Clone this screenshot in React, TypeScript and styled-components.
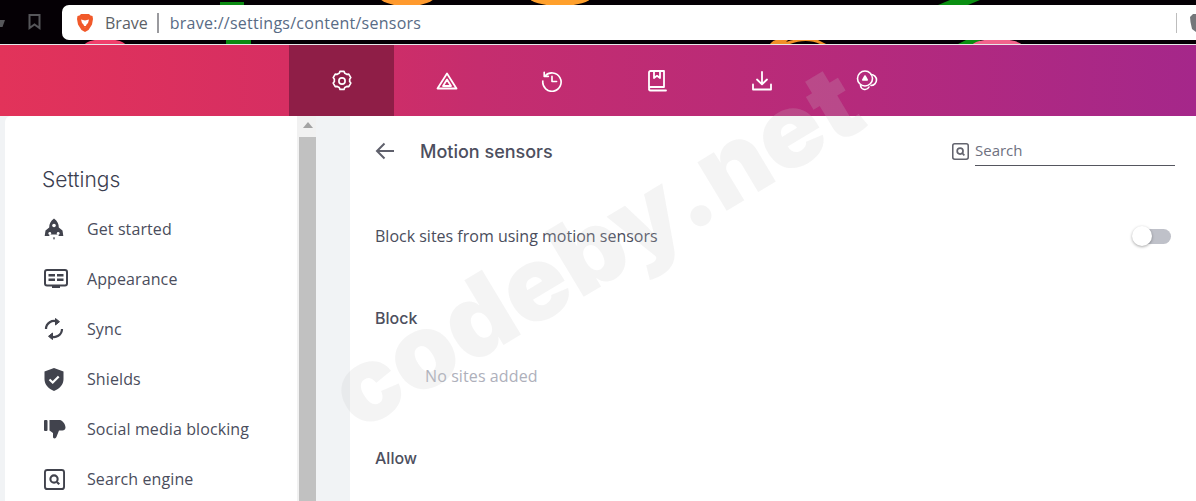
import * as React from "react";
import styled, { createGlobalStyle } from "styled-components";

const GlobalStyle = createGlobalStyle`
  html, body { margin: 0; padding: 0; height: 100%; background: #f1f3f5; }
  #root { height: 100%; }
`;

const Page = styled.div`
  position: relative;
  width: 1196px;
  height: 501px;
  overflow: hidden;
  display: flex;
  flex-direction: column;
  font-family: "Open Sans", "Lato", sans-serif;
`;

const BrowserBar = styled.div`
  position: relative;
  flex: none;
  background: #050005;
  border-bottom: 1px solid #e8e8ea;
  display: flex;
  align-items: flex-start;
  padding-top: 5px;
  height: 39px;
`;

const Wallpaper = styled.svg`
  position: absolute;
  left: 0;
  top: 0;
`;

const BarButton = styled.div`
  position: relative;
  width: 62px;
  height: 35px;
  flex: none;
`;

const BookmarkGlyph = styled.svg`
  position: absolute;
  left: 28px;
  top: 9px;
`;

const BackGlyph = styled.svg`
  position: absolute;
  left: 0;
  top: 15px;
`;

const AddressBox = styled.div`
  position: relative;
  flex: 1;
  height: 35px;
  background: #fff;
  border-radius: 7px 0 0 7px;
  display: flex;
  align-items: center;
  padding-left: 15px;
  font-family: "Open Sans", sans-serif;
  font-size: 16px;
  color: #5f6368;
`;

const SiteName = styled.span`
  margin-left: 12px;
  color: #5c5f66;
`;

const AddressDivider = styled.span`
  width: 2px;
  height: 20px;
  background: #9a9a9e;
  margin: 0 11px 0 9px;
`;

const Url = styled.span`
  color: #586b85;
  letter-spacing: 0.26px;
`;

const BarEnd = styled.div`
  margin-left: auto;
  display: flex;
  align-items: center;
`;

const EndDivider = styled.span`
  width: 1px;
  height: 20px;
  background: #bdbdbd;
  margin-right: 13px;
`;

const NavBar = styled.nav`
  height: 71px;
  flex: none;
  display: flex;
  padding-left: 289px;
  background: linear-gradient(90deg, #e2335a 0%, #d62e62 24%, #c52d6e 40%, #b52a7c 72%, #a5278a 100%);
`;

const NavItem = styled.div<{ $active?: boolean }>`
  width: 105px;
  display: flex;
  align-items: center;
  justify-content: center;
  background: ${(p) => (p.$active ? "#8f1e47" : "transparent")};
`;

const Main = styled.div`
  flex: 1;
  min-height: 0;
  display: flex;
`;

const Sidebar = styled.aside`
  width: 292px;
  margin-left: 5px;
  flex: none;
  background: #fff;
  border-radius: 6px 0 0 0;
  padding: 49px 0 0 37px;
  box-sizing: border-box;
`;

const SidebarTitle = styled.h2`
  margin: 0 0 9px;
  font-family: "Inter", sans-serif;
  font-weight: 300;
  font-size: 21px;
  line-height: 30px;
  color: #3b3e4f;
`;

const SideRow = styled.div`
  height: 50px;
  display: flex;
  align-items: center;
  font-size: 16px;
  letter-spacing: 0.1px;
  color: #4a4d5c;
`;

const SideIcon = styled.span`
  width: 45px;
  flex: none;
  display: flex;
  padding-left: 2px;
  box-sizing: border-box;
`;

const ScrollTrack = styled.div`
  width: 19px;
  margin-right: 34px;
  flex: none;
  background: #f1f1f1;
  padding-left: 2px;
  box-sizing: border-box;
  display: flex;
  flex-direction: column;
`;

const ScrollArrow = styled.div`
  height: 21px;
  flex: none;
  display: flex;
  align-items: center;
  justify-content: center;
  padding-bottom: 3px;
  box-sizing: border-box;
`;

const ScrollThumb = styled.div`
  flex: 1;
  background: #c1c1c1;
`;

const Content = styled.section`
  flex: 1;
  background: #fff;
  padding: 0 21px 0 25px;
`;

const HeaderRow = styled.div`
  height: 70px;
  display: flex;
  align-items: center;
`;

const BackButton = styled.span`
  width: 45px;
  display: flex;
`;

const PageTitle = styled.h1`
  margin: 0;
  font-family: "Inter", sans-serif;
  font-weight: 500;
  font-size: 18px;
  color: #4d4f5e;
`;

const SearchBox = styled.div`
  margin-left: auto;
  display: flex;
  align-items: center;
`;

const SearchField = styled.div`
  width: 200px;
  height: 31px;
  margin: 0 0 1px 6px;
  box-sizing: border-box;
  border-bottom: 1px solid #55565f;
  font-size: 15px;
  line-height: 30px;
  color: #6e7180;
`;

const SettingRow = styled.div`
  height: 100px;
  margin-bottom: 17px;
  display: flex;
  align-items: center;
  justify-content: space-between;
  font-size: 16px;
  color: #4a4d5c;
`;

const Toggle = styled.div`
  position: relative;
  width: 34px;
  height: 15px;
  margin-right: 4px;
  border-radius: 8px;
  background: #bfc1c9;
`;

const ToggleKnob = styled.span`
  position: absolute;
  left: -5px;
  top: -3px;
  width: 20px;
  height: 20px;
  border-radius: 50%;
  background: #fff;
  box-shadow: 0 1px 3px rgba(0, 0, 0, 0.35);
`;

const SectionTitle = styled.h3`
  margin: 0;
  height: 30px;
  line-height: 30px;
  font-family: "Inter", sans-serif;
  font-weight: 500;
  font-size: 16px;
  color: #4d4f5e;
`;

const EmptyNote = styled.div`
  height: 110px;
  padding: 28px 0 0 50px;
  box-sizing: border-box;
  font-size: 16px;
  letter-spacing: 0.1px;
  line-height: 30px;
  color: #aeb0bb;
`;

const Watermark = styled.div`
  position: absolute;
  left: 296px;
  top: 186px;
  font-family: "Inter", sans-serif;
  font-weight: 900;
  font-size: 104px;
  line-height: 120px;
  white-space: nowrap;
  color: rgba(200, 200, 200, 0.2);
  transform: rotate(-31deg);
  pointer-events: none;
`;

const stroke = { fill: "none", stroke: "#fff", strokeWidth: 1.8, strokeLinecap: "round" as const, strokeLinejoin: "round" as const };
const dark = "#41434d";

const GearIcon = () => (
  <svg width="22" height="22" viewBox="0 0 24 24" {...stroke}>
    <circle cx="12" cy="12" r="3.400" />
    <path d="M9 3.500 9.800 1.500h4.400l.8 2a9 9 0 0 1 2.300 1.300l2.100-.3 2.200 3.800-1.300 1.700a9 9 0 0 1 0 2.600l1.300 1.700-2.200 3.800-2.100-.3a9 9 0 0 1-2.300 1.300l-.8 2H9.800l-.8-2a9 9 0 0 1-2.300-1.300l-2.100.3-2.200-3.800 1.300-1.700a9 9 0 0 1 0-2.600L2.400 8.300l2.200-3.800 2.100.3A9 9 0 0 1 9 3.500Z" />
  </svg>
);

const RewardsIcon = () => (
  <svg width="22" height="18" viewBox="0 0 22 18" {...stroke}>
    <path d="M11 1.500 1.500 16.500h19L11 1.500Z" />
    <path d="M11 7.500 7 14h8l-4-6.500Z" />
  </svg>
);

const HistoryIcon = () => (
  <svg width="22" height="22" viewBox="0 0 24 24" {...stroke}>
    <path d="M4.500 6.500A10 10 0 1 1 2 12" />
    <path d="M3.500 2.500v4.500H8" />
    <path d="M12 7v5.500h5" />
  </svg>
);

const BookmarksIcon = () => (
  <svg width="20" height="22" viewBox="0 0 20 22" {...stroke}>
    <path d="M2 18V2.500A1.500 1.500 0 0 1 3.500 1H17v16H3.500A1.700 1.700 0 0 0 2 18.500 1.800 1.800 0 0 0 3.500 20.500H19" />
    <path d="M7 1v7l3-2.200L13 8V1" />
  </svg>
);

const DownloadIcon = () => (
  <svg width="20" height="20" viewBox="0 0 20 20" {...stroke}>
    <path d="M10 1v12M5 8.500l5 4.800 5-4.800" />
    <path d="M1 13.500v5h18v-5" />
  </svg>
);

const WalletIcon = () => (
  <svg width="22" height="22" viewBox="0 0 22 22" {...stroke} strokeWidth={1.6}>
    <circle cx="9" cy="8.500" r="7.500" />
    <path d="M15 4.500a5.500 5.500 0 1 1 0 11" />
    <path d="M4.500 15.500a4.500 4.500 0 0 0 8.500 1.500" />
    <path d="M9 6 6.800 10h4.400L9 6Z" fill="#fff" />
  </svg>
);

const RocketIcon = () => (
  <svg width="20" height="23" viewBox="0 0 20 22" fill={dark}>
    <path d="M10 0c3.500 2.500 4.800 5.500 4.800 9l3.700 3 .8 5.500H15l-1.200-1.500H6.200L5 17.500H.7L1.500 12l3.700-3C5.200 5.500 6.500 2.500 10 0Z" />
    <circle cx="10" cy="7" r="1.800" fill="#fff" />
    <circle cx="5.800" cy="15" r="1.400" fill="#fff" />
    <circle cx="14.200" cy="15" r="1.400" fill="#fff" />
    <path d="M8.900 19h2.200L10 21.500 8.900 19Z" />
  </svg>
);

const AppearanceIcon = () => (
  <svg width="24" height="20" viewBox="0 0 24 20">
    <rect x="1" y="1" width="22" height="15.500" rx="2" fill="none" stroke={dark} strokeWidth="2" />
    <path d="M4.500 5h6.500v2.500H4.500zM13 5h6.500v2.500H13zM4.500 9.500h6.500V12H4.500zM13 9.500h6.500V12H13zM8 17h8v2H8z" fill={dark} />
  </svg>
);

const SyncIcon = () => (
  <svg width="20" height="22" viewBox="0 0 20 22" fill="none" stroke={dark} strokeWidth="2.200">
    <path d="M2 11a8 8 0 0 1 11.500-7.200" />
    <path d="M18 11a8 8 0 0 1-11.500 7.200" />
    <path d="M11.500 .5l4 3.200-4 3.300z" fill={dark} strokeWidth="1" />
    <path d="M8.500 15l-4 3.300 4 3.200z" fill={dark} strokeWidth="1" />
  </svg>
);

const ShieldIcon = () => (
  <svg width="20" height="23" viewBox="0 0 20 23">
    <path d="M10 0 19.500 3.500V11c0 5.500-4 9.800-9.500 12C4.500 20.800.5 16.500.5 11V3.500L10 0Z" fill={dark} />
    <path d="m5.500 11.500 3.200 3 6-6" fill="none" stroke="#fff" strokeWidth="2.200" />
  </svg>
);

const ThumbDownIcon = () => (
  <svg width="22" height="20" viewBox="0 0 22 20" fill={dark}>
    <rect x="0" y="1" width="3.500" height="11" rx="1" />
    <path d="M5.500 1H16c2 0 5.500 4 5.500 7.500 0 2-1.500 3-3 3h-3.500L13 16.500c-.5 2-1.500 3-2.500 3-.8 0-1.500-.800-1.500-1.500V14L5.500 11.500V1Z" />
  </svg>
);

const SearchEngineIcon = ({ color, size }: { color: string; size: number }) => (
  <svg width={size} height={size} viewBox="0 0 22 22" fill="none" stroke={color} strokeWidth="2">
    <rect x="1" y="1" width="20" height="20" rx="2.500" />
    <circle cx="10.500" cy="10.500" r="3.800" strokeWidth="2.200" />
    <path d="m13.500 13.500 2.500 2.500" strokeWidth="2.200" />
  </svg>
);

const BackArrow = () => (
  <svg width="20" height="18" viewBox="0 0 20 18" fill="none" stroke="#5f606c" strokeWidth="2">
    <path d="M19 9H2M9.500 1.500 2 9l7.500 7.500" />
  </svg>
);

const BraveLogo = () => (
  <svg width="16" height="18" viewBox="0 0 16 18">
    <path d="M4 0h8l1.500 1.500L15.500 2l.5 3-1 5.500-3.500 5.500L8 18l-3.500-2L1 10.500 0 5l.5-3 2-.5L4 0Z" fill="#f1592a" />
    <path d="M4 5.500 8 6.500 12 5.500 11 9l-1.500 1.500L8 14l-1.500-3.500L5 9 4 5.500Z" fill="#fff" />
    <path d="M6.500 12h3L8 14.500 6.500 12Z" fill="#f1592a" />
  </svg>
);

const SIDE_ITEMS: [string, React.ReactNode][] = [
  ["Get started", <RocketIcon />],
  ["Appearance", <AppearanceIcon />],
  ["Sync", <SyncIcon />],
  ["Shields", <ShieldIcon />],
  ["Social media blocking", <ThumbDownIcon />],
  ["Search engine", <SearchEngineIcon color={dark} size={21} />],
];

const NAV_ICONS = [
  <GearIcon />,
  <RewardsIcon />,
  <HistoryIcon />,
  <BookmarksIcon />,
  <DownloadIcon />,
  <WalletIcon />,
];

export default function App() {
  return (
    <Page>
      <GlobalStyle />
      <BrowserBar>
        <Wallpaper width="1196" height="44" viewBox="0 0 1196 44">
          <ellipse cx="407" cy="-4" rx="28" ry="10" fill="#ff9a2e" />
          <ellipse cx="560" cy="-3" rx="31" ry="9" fill="#ffa02c" />
          <path d="M220 2h24v4h-24zM226 40h25v4h-25z" fill="#0a8a12" />
          <path d="M938 5l12-5h30l-12 5zM958 44l10-5h14l-6 5z" fill="#0a8f12" />
          <ellipse cx="105" cy="46" rx="21" ry="7" fill="#f0406c" />
          <path d="M770 44c3-4 6-5 12-4h6l-2 2c10-4 26-4 32-2l8 4h-6c-8-4-20-4-30 0Z" fill="#f09028" />
          <ellipse cx="997" cy="46" rx="25" ry="7" fill="#f2648c" />
        </Wallpaper>
        <BarButton>
          <BookmarkGlyph width="13" height="16" viewBox="0 0 13 16" fill="none" stroke="#56565a" strokeWidth="2">
            <path d="M1.500 1h10v13l-5-3.500-5 3.500z" />
          </BookmarkGlyph>
          <BackGlyph width="5" height="7" viewBox="0 0 5 7" fill="#56565a">
            <path d="M0 0h5L2.500 7H0z" />
          </BackGlyph>
        </BarButton>
        <AddressBox>
          <BraveLogo />
          <SiteName>Brave</SiteName>
          <AddressDivider />
          <Url>brave://settings/content/sensors</Url>
          <BarEnd>
            <EndDivider />
            <svg width="6" height="18" viewBox="0 0 6 18" fill="#75767a">
              <path d="M3 0h3v18L2 15 .5 8 0 3z" />
            </svg>
          </BarEnd>
        </AddressBox>
      </BrowserBar>
      <NavBar>
        {NAV_ICONS.map((icon, i) => (
          <NavItem key={i} $active={i === 0}>
            {icon}
          </NavItem>
        ))}
      </NavBar>
      <Main>
        <Sidebar>
          <SidebarTitle>Settings</SidebarTitle>
          {SIDE_ITEMS.map(([label, icon]) => (
            <SideRow key={label}>
              <SideIcon>{icon}</SideIcon>
              {label}
            </SideRow>
          ))}
        </Sidebar>
        <ScrollTrack>
          <ScrollArrow>
            <svg width="10" height="6" viewBox="0 0 10 6" fill="#a3a3a3">
              <path d="M5 0l5 6H0z" />
            </svg>
          </ScrollArrow>
          <ScrollThumb />
        </ScrollTrack>
        <Content>
          <HeaderRow>
            <BackButton>
              <BackArrow />
            </BackButton>
            <PageTitle>Motion sensors</PageTitle>
            <SearchBox>
              <SearchEngineIcon color="#63646e" size={17} />
              <SearchField>Search</SearchField>
            </SearchBox>
          </HeaderRow>
          <SettingRow>
            Block sites from using motion sensors
            <Toggle>
              <ToggleKnob />
            </Toggle>
          </SettingRow>
          <SectionTitle>Block</SectionTitle>
          <EmptyNote>No sites added</EmptyNote>
          <SectionTitle>Allow</SectionTitle>
        </Content>
      </Main>
      <Watermark>codeby.net</Watermark>
    </Page>
  );
}
